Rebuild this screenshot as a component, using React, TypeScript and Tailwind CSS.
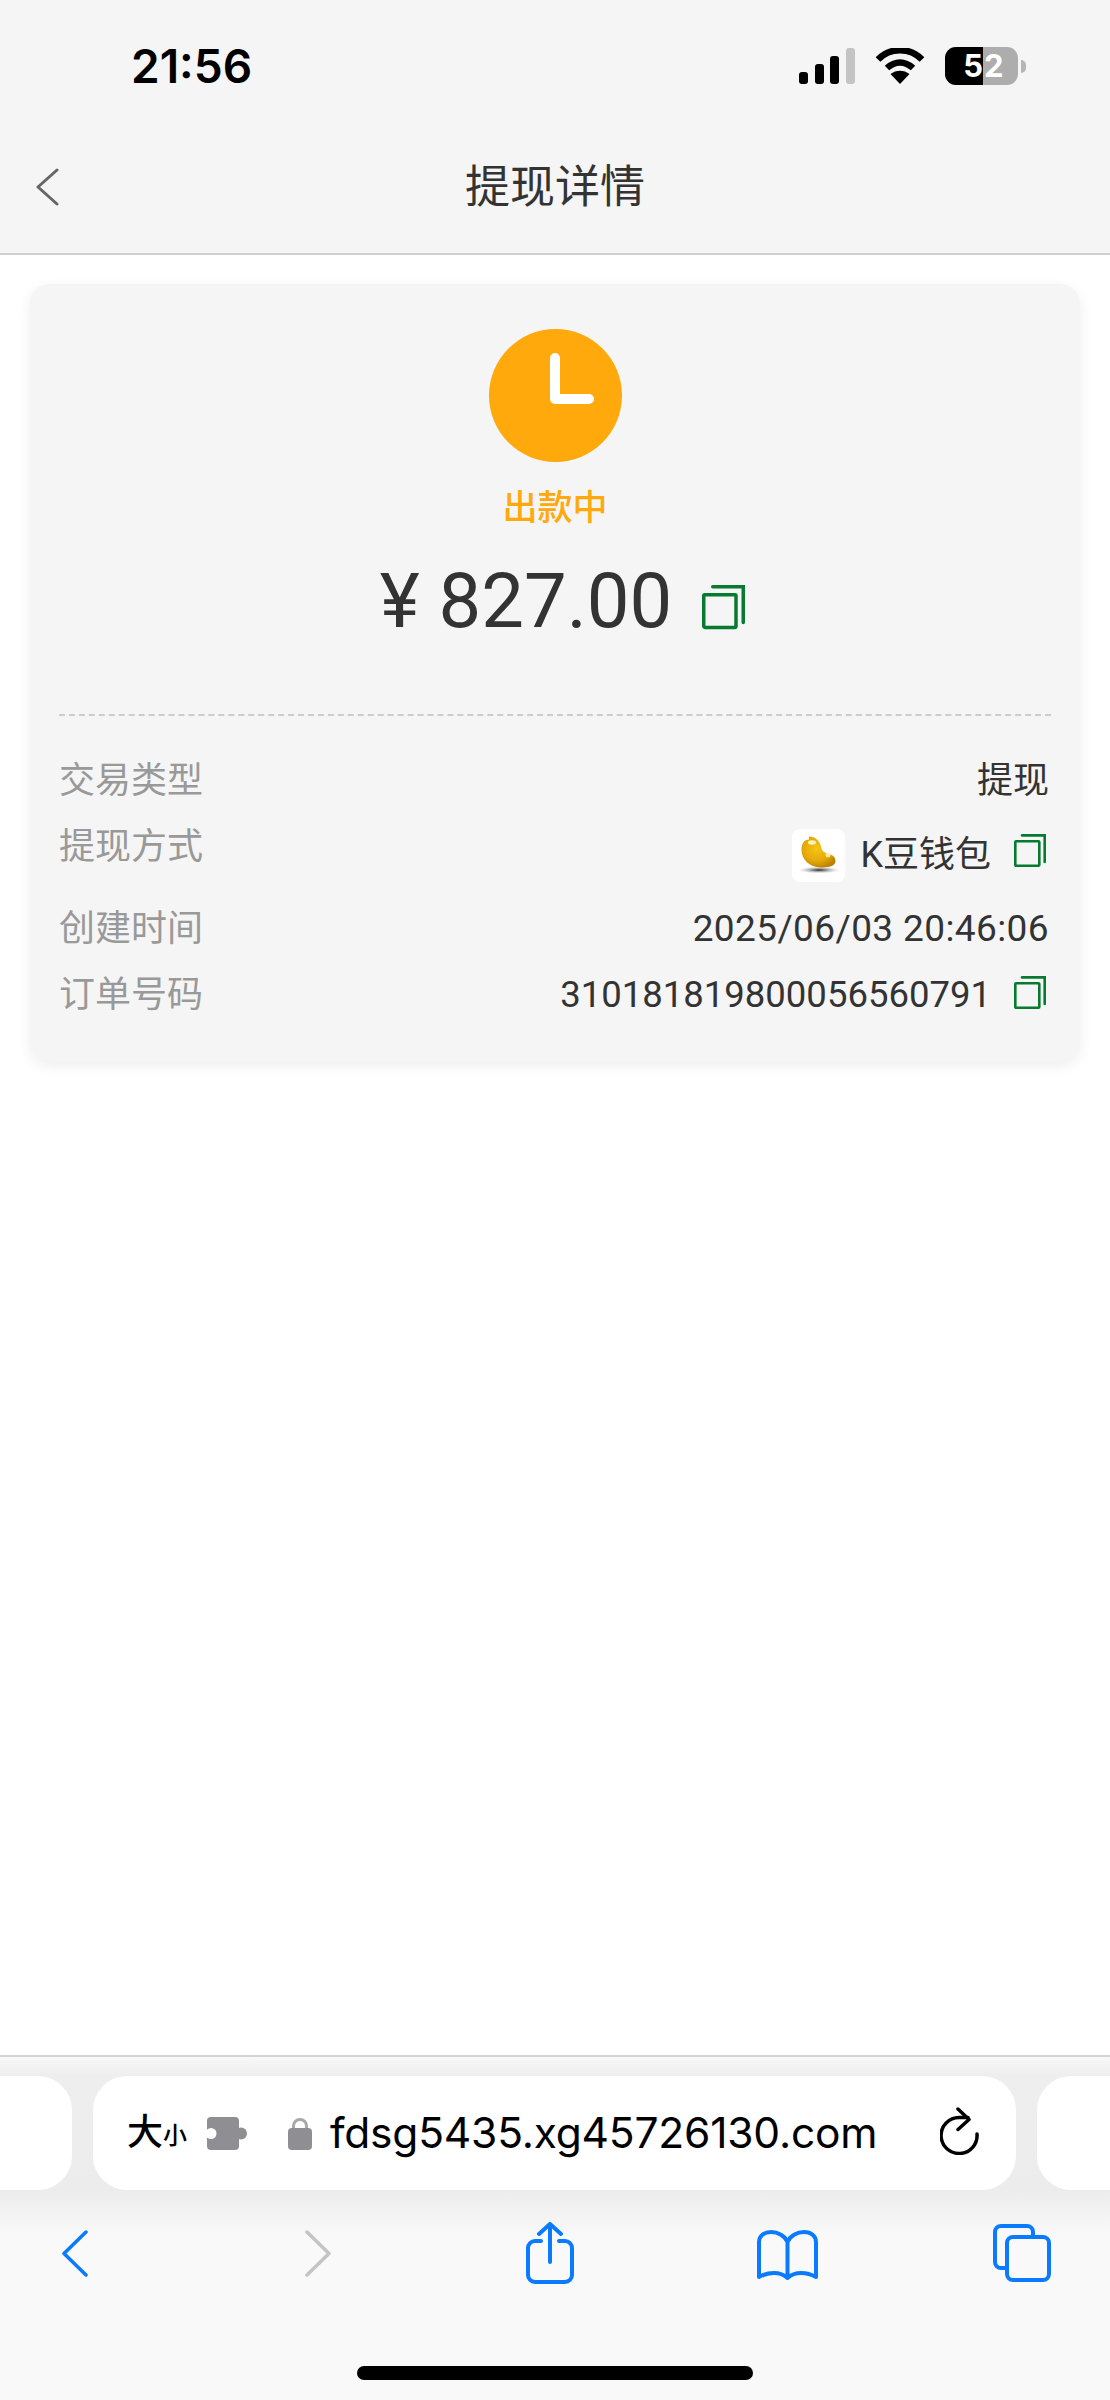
const GREEN = "#067a30";

function CopyIcon({ className }: { className: string }) {
  return (
    <svg viewBox="0 0 32 33" fill="none" stroke={GREEN} strokeWidth="2.6" className={className}>
      <rect x="1.3" y="7.3" width="24" height="24.4" rx="0.8" />
      <path d="M8 1.4h22.7v26.6" strokeLinecap="round" />
    </svg>
  );
}

function Bean() {
  return (
    <svg viewBox="0 0 53 53" className="w-[53px] h-[53px]">
      <defs>
        <radialGradient id="bean" cx="45%" cy="40%" r="65%">
          <stop offset="0%" stopColor="#f5c518" />
          <stop offset="60%" stopColor="#e6a908" />
          <stop offset="100%" stopColor="#b98002" />
        </radialGradient>
        <radialGradient id="beanShadow" cx="50%" cy="50%" r="50%">
          <stop offset="0%" stopColor="#222" />
          <stop offset="100%" stopColor="#bbb" stopOpacity="0" />
        </radialGradient>
      </defs>
      <ellipse cx="27" cy="41" rx="21" ry="3.5" fill="url(#beanShadow)" />
      <path d="M17 10.500c-5 0-7.500 4.500-7.500 10.500 0 9 8 17.500 19 17.500 6 0 15-.5 15-6.500 0-5-5-7-9-8-5-1.500-4.500-4-6-8-1.500-5-6-8.500-11.500-8.500z" fill="url(#bean)" />
      <ellipse cx="20" cy="13.500" rx="4" ry="2.200" fill="#fff6c0" opacity="0.95" />
      <circle cx="36" cy="26" r="2.500" fill="#fff6c0" opacity="0.85" />
    </svg>
  );
}

function StatusIcons() {
  return (
    <div className="flex items-center">
      <svg viewBox="0 0 56 36" className="w-[56px] h-[36px]">
        <rect x="0" y="24" width="9" height="12" rx="3" fill="#000" />
        <rect x="16" y="16" width="9" height="20" rx="3" fill="#000" />
        <rect x="31" y="8" width="9" height="28" rx="3" fill="#000" />
        <rect x="47" y="0" width="9" height="36" rx="3" fill="#c4c4c4" />
      </svg>
      <svg viewBox="0 0 50 36" className="w-[50px] h-[36px] ml-[20px]">
        <path d="M3 11.500C15-1 35-1 47 11.500" fill="none" stroke="#000" strokeWidth="6.500" strokeLinejoin="round" />
        <path d="M12 20c8-7.500 18-7.500 26 0" fill="none" stroke="#000" strokeWidth="6.500" />
        <path d="M25 36l-9.500-10c5.500-4.500 13.500-4.500 19 0z" fill="#000" />
      </svg>
      <div className="ml-[20px] w-[73px] h-[38px] rounded-[11px] overflow-hidden flex bg-[#adadad] text-white font-bold text-[31px] leading-[38px] font-['Inter']">
        <div className="w-[38px] bg-black text-right">5</div>
        <div className="pl-[1px]">2</div>
      </div>
      <div className="ml-[3px] w-[5px] h-[13px] rounded-r-full bg-[#b5b5b5]" />
    </div>
  );
}

function Row({ label, children, className }: { label: string; children: React.ReactNode; className: string }) {
  return (
    <div className={`flex justify-between items-start ${className}`}>
      <span className="text-[#999] text-[36px] leading-[40px]">{label}</span>
      {children}
    </div>
  );
}

export default function App() {
  return (
    <div className="h-[2400px] w-[1110px] flex flex-col bg-white overflow-hidden font-['Roboto','Noto_Sans_CJK_SC',sans-serif] text-[#333]">
      {/* Header */}
      <div className="h-[255px] bg-[#f5f5f5] border-b-2 border-[#d0d0d0] shrink-0 pt-[46px]">
        <div className="flex justify-between items-center h-[40px] pl-[131px] pr-[84px]">
          <span className="text-[46px] leading-[40px] font-semibold text-black font-['Inter']">21:56</span>
          <StatusIcons />
        </div>
        <div className="relative flex items-center justify-center h-[60px] mt-[71px]">
          <svg viewBox="0 0 24 38" className="absolute left-[35px] top-[11px] w-[24px] h-[38px]" fill="none" stroke="#666" strokeWidth="3" strokeLinecap="round" strokeLinejoin="round">
            <path d="M22 2L3 19l19 17" />
          </svg>
          <span className="text-[45px] leading-[60px] mt-[2px]">提现详情</span>
        </div>
      </div>

      {/* Card */}
      <div className="mt-[29px] mx-[30px] h-[778px] rounded-[20px] bg-[#f5f5f5] px-[29px] pt-[45px] shadow-[0_4px_14px_rgba(0,0,0,0.07)] shrink-0">
        <div className="flex flex-col items-center">
          <div className="w-[133px] h-[133px] rounded-full bg-[#ffa90c] flex items-center justify-center">
            <svg viewBox="0 0 133 133" className="w-[133px] h-[133px]" fill="none" stroke="#fff" strokeWidth="10" strokeLinecap="round" strokeLinejoin="round">
              <path d="M66 29v41h34" />
            </svg>
          </div>
          <div className="mt-[27px] text-[35px] leading-[40px] font-medium text-[#ffa90c]">出款中</div>
          <div className="mt-[32px] flex items-center h-[80px] ml-[15px]">
            <span className="text-[76px] leading-[80px]">¥ 827.00</span>
            <CopyIcon className="ml-[30px] w-[43px] h-[46px] mt-[12px]" />
          </div>
        </div>
        <div className="mt-[73px] border-t-2 border-dashed border-[#cccccc]" />

        <Row label="交易类型" className="mt-[45px] pr-[2px]">
          <span className="text-[36px] leading-[40px]">提现</span>
        </Row>
        <Row label="提现方式" className="mt-[26px] pr-[5px]">
          <div className="flex items-center">
            <div className="w-[53px] h-[53px] rounded-[8px] bg-white overflow-hidden"><Bean /></div>
            <span className="ml-[15px] text-[36px] leading-[56px]">K豆钱包</span>
            <CopyIcon className="ml-[23px] w-[32px] h-[33px] mb-[10px]" />
          </div>
        </Row>
        <Row label="创建时间" className="mt-[26px] pr-[2px]">
          <span className="text-[37px] leading-[40px] tracking-[0.4px]">2025/06/03 20:46:06</span>
        </Row>
        <Row label="订单号码" className="mt-[26px] pr-[5px]">
          <div className="flex items-center">
            <span className="text-[36.500px] leading-[40px]">310181819800056560791</span>
            <CopyIcon className="ml-[23px] w-[32px] h-[33px] mb-[6px]" />
          </div>
        </Row>
      </div>

      <div className="flex-1" />

      {/* Safari toolbar */}
      <div className="h-[345px] shrink-0 border-t-2 border-[#d4d4d4] bg-[linear-gradient(180deg,#f8f8f8_0px,#eeeeee_19px,#ececec_133px,#f9f9f9_178px)]">
        <div className="flex gap-[21px] mt-[19px] h-[114px]">
          <div className="w-[72px] rounded-r-[34px] bg-white" />
          <div className="relative w-[923px] rounded-[34px] bg-white flex items-center pl-[34px] text-black">
            <span className="text-[36px] leading-[40px] font-medium">大</span>
            <span className="text-[24px] leading-[40px] font-medium mt-[6px]">小</span>
            <svg viewBox="0 0 40 33" className="ml-[20px] w-[40px] h-[33px]" fill="#8e8e93">
              <rect x="0" y="0" width="32" height="33" rx="4" />
              <circle cx="34" cy="16.500" r="6" />
              <circle cx="4" cy="16.500" r="5.500" fill="#fff" />
              <rect x="0" y="14" width="5" height="5" fill="#fff" />
            </svg>
            <svg viewBox="0 0 24 33" className="ml-[41px] w-[24px] h-[33px]">
              <path d="M5.500 14V9a6.500 6.500 0 0113 0v5" fill="none" stroke="#a8a8ac" strokeWidth="3" />
              <rect x="0" y="11" width="24" height="22" rx="4" fill="#8e8e93" />
            </svg>
            <span className="ml-[18px] text-[42.500px] leading-[60px] tracking-[-0.2px] font-['Inter']">fdsg5435.xg45726130.com</span>
            <svg viewBox="0 0 40 48" className="absolute right-[36px] top-[31px] w-[40px] h-[48px]" fill="none" stroke="#000" strokeWidth="3.500" strokeLinecap="round" strokeLinejoin="round">
              <path d="M37 27A18 18 0 1 1 19 10.500h9" />
              <path d="M18 2l11 10.500-11 10" />
            </svg>
          </div>
          <div className="flex-1 rounded-l-[34px] bg-white" />
        </div>

        <div className="flex items-center h-[62px] mt-[32px] pl-[62px]">
          <svg viewBox="0 0 26 47" className="w-[26px] h-[47px]" fill="none" stroke="#0a7aff" strokeWidth="3.500" strokeLinecap="round" strokeLinejoin="round">
            <path d="M24 2L2 23.500 24 45" />
          </svg>
          <svg viewBox="0 0 27 47" className="ml-[216px] w-[27px] h-[47px]" fill="none" stroke="#c4c4c4" strokeWidth="3.500" strokeLinecap="round" strokeLinejoin="round">
            <path d="M3 2l22 21.500L3 45" />
          </svg>
          <svg viewBox="0 0 48 62" className="ml-[195px] w-[48px] h-[62px]" fill="none" stroke="#0a7aff" strokeWidth="4" strokeLinecap="round" strokeLinejoin="round">
            <path d="M15 19H9a7 7 0 00-7 7v27a7 7 0 007 7h30a7 7 0 007-7V26a7 7 0 00-7-7h-6" />
            <path d="M24 40V2M13 12L24 2l11 10" />
          </svg>
          <svg viewBox="0 0 61 50" className="ml-[183px] w-[61px] h-[50px] mt-[4px]" fill="none" stroke="#0a7aff" strokeWidth="4" strokeLinecap="round" strokeLinejoin="round">
            <path d="M30.500 12C28 6 21 2 14 2 7 2 2 6 2 12v35c9-5 21-6 28.500 1 7.500-7 19.500-6 28.500-1V12c0-6-5-10-12-10-7 0-14 4-16.500 10zM30.500 12v36" />
          </svg>
          <svg viewBox="0 0 58 58" className="ml-[175px] w-[58px] h-[58px]" fill="none" stroke="#0a7aff" strokeWidth="4">
            <path d="M12 44H8a6 6 0 01-6-6V8a6 6 0 016-6h26a6 6 0 016 6v4" />
            <rect x="14" y="13" width="42" height="43" rx="6" />
          </svg>
        </div>

        <div className="mx-auto mt-[82px] w-[396px] h-[14px] rounded-full bg-black" />
      </div>
    </div>
  );
}
